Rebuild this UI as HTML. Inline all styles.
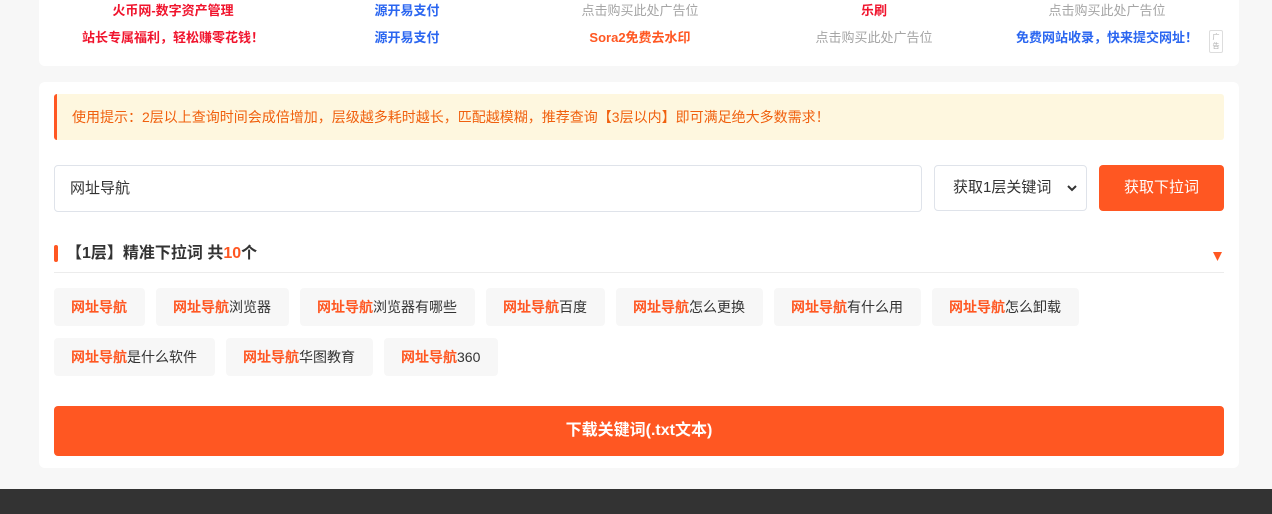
<!DOCTYPE html>
<html><head><meta charset="utf-8"><style>
*{box-sizing:border-box;margin:0;padding:0}
body{width:1272px;height:514px;background:#f7f7f7;font-family:"Liberation Sans","Noto Sans CJK SC",sans-serif;position:relative;overflow:hidden}
.card{position:absolute;left:39px;width:1200px;background:#fff;border-radius:6px}
.ad{position:absolute;width:234px;text-align:center;font-size:13px;line-height:16px}
.b{font-weight:bold}
.red{color:#f0142d}.blue{color:#2b66f0}.gray{color:#a5a5a5}.org{color:#ff5722}
.tip{position:absolute;left:15px;top:12px;width:1170px;height:46px;background:#fef7df;border-left:3px solid #ff5722;border-radius:3px;color:#f0600e;font-size:14px;line-height:46px;padding-left:15px}
.inp{position:absolute;left:15px;top:83px;width:868px;height:47px;border:1px solid #dfe3ea;border-radius:4px;font-size:15px;color:#333;line-height:45px;padding-left:15px}
.sel{position:absolute;left:895px;top:83px;width:153px;height:46px;border:1px solid #dfe3ea;border-radius:4px;font-size:15px;color:#333;line-height:44px;padding-left:18px}
.btn{position:absolute;left:1060px;top:83px;width:125px;height:46px;background:#ff5722;border-radius:4px;color:#fff;font-size:15px;line-height:46px;text-align:center}
.h{position:absolute;left:15px;top:162px;width:1170px;height:29px;border-bottom:1px solid #ececec}
.h .bar{position:absolute;left:0;top:1px;width:4px;height:17px;background:#ff5722;border-radius:2px}
.h .t{position:absolute;left:12px;top:0;font-size:16px;font-weight:bold;color:#333;line-height:19px}
.tags{position:absolute;left:15px;top:206px;width:1170px}
.tag{float:left;height:38px;line-height:38px;padding:0 18px 0 17px;background:#f7f7f7;border-radius:4px;margin:0 11px 12px 0;font-size:14px;color:#333}
.tag b{color:#ff5722}
.dl{position:absolute;left:15px;top:324px;width:1170px;height:50px;background:#ff5722;border-radius:4px;color:#fff;font-weight:bold;font-size:16px;line-height:50px;text-align:center}
</style></head><body>
<div class="card" style="top:-6px;height:72px">
<div class="ad b red" style="left:17px;top:9px">火币网-数字资产管理</div>
<div class="ad b blue" style="left:251px;top:9px">源开易支付</div>
<div class="ad gray" style="left:484px;top:9px">点击购买此处广告位</div>
<div class="ad b red" style="left:718px;top:9px">乐刷</div>
<div class="ad gray" style="left:951px;top:9px">点击购买此处广告位</div>
<div class="ad b red" style="left:17px;top:36px">站长专属福利，轻松赚零花钱！</div>
<div class="ad b blue" style="left:251px;top:36px">源开易支付</div>
<div class="ad b org" style="left:484px;top:36px">Sora2免费去水印</div>
<div class="ad gray" style="left:718px;top:36px">点击购买此处广告位</div>
<div class="ad b blue" style="left:951px;top:36px">免费网站收录，快来提交网址！</div>
<div style="position:absolute;left:1170px;top:36px;width:14px;height:23px;border:1px solid #ddd;border-radius:2px;font-size:7px;color:#aaa;line-height:9px;text-align:center;padding-top:2px">广<br>告</div>
</div>
<div class="card" style="top:82px;height:386px">
<div class="tip">使用提示：2层以上查询时间会成倍增加，层级越多耗时越长，匹配越模糊，推荐查询【3层以内】即可满足绝大多数需求！</div>
<div class="inp">网址导航</div>
<div class="sel">获取1层关键词<svg style="position:absolute;right:9px;top:19px" width="10" height="7" viewBox="0 0 10 7"><path d="M1 1l4 4 4-4" fill="none" stroke="#333" stroke-width="2"/></svg></div>
<div class="btn">获取下拉词</div>
<div class="h"><div class="bar"></div><div class="t">【1层】精准下拉词 共<span class="org">10</span>个</div><svg style="position:absolute;right:2px;top:8px" width="9" height="9" viewBox="0 0 9 9"><path d="M0 0h9L4.5 9z" fill="#ff5722"/></svg></div>
<div class="tags">
<div class="tag"><b>网址导航</b></div>
<div class="tag"><b>网址导航</b>浏览器</div>
<div class="tag"><b>网址导航</b>浏览器有哪些</div>
<div class="tag"><b>网址导航</b>百度</div>
<div class="tag"><b>网址导航</b>怎么更换</div>
<div class="tag"><b>网址导航</b>有什么用</div>
<div class="tag"><b>网址导航</b>怎么卸载</div>
<div style="clear:both"></div>
<div class="tag"><b>网址导航</b>是什么软件</div>
<div class="tag"><b>网址导航</b>华图教育</div>
<div class="tag"><b>网址导航</b>360</div>
</div>
<div class="dl">下载关键词(.txt文本)</div>
</div>
<div style="position:absolute;left:0;top:489px;width:1272px;height:25px;background:#333"></div>
</body></html>
